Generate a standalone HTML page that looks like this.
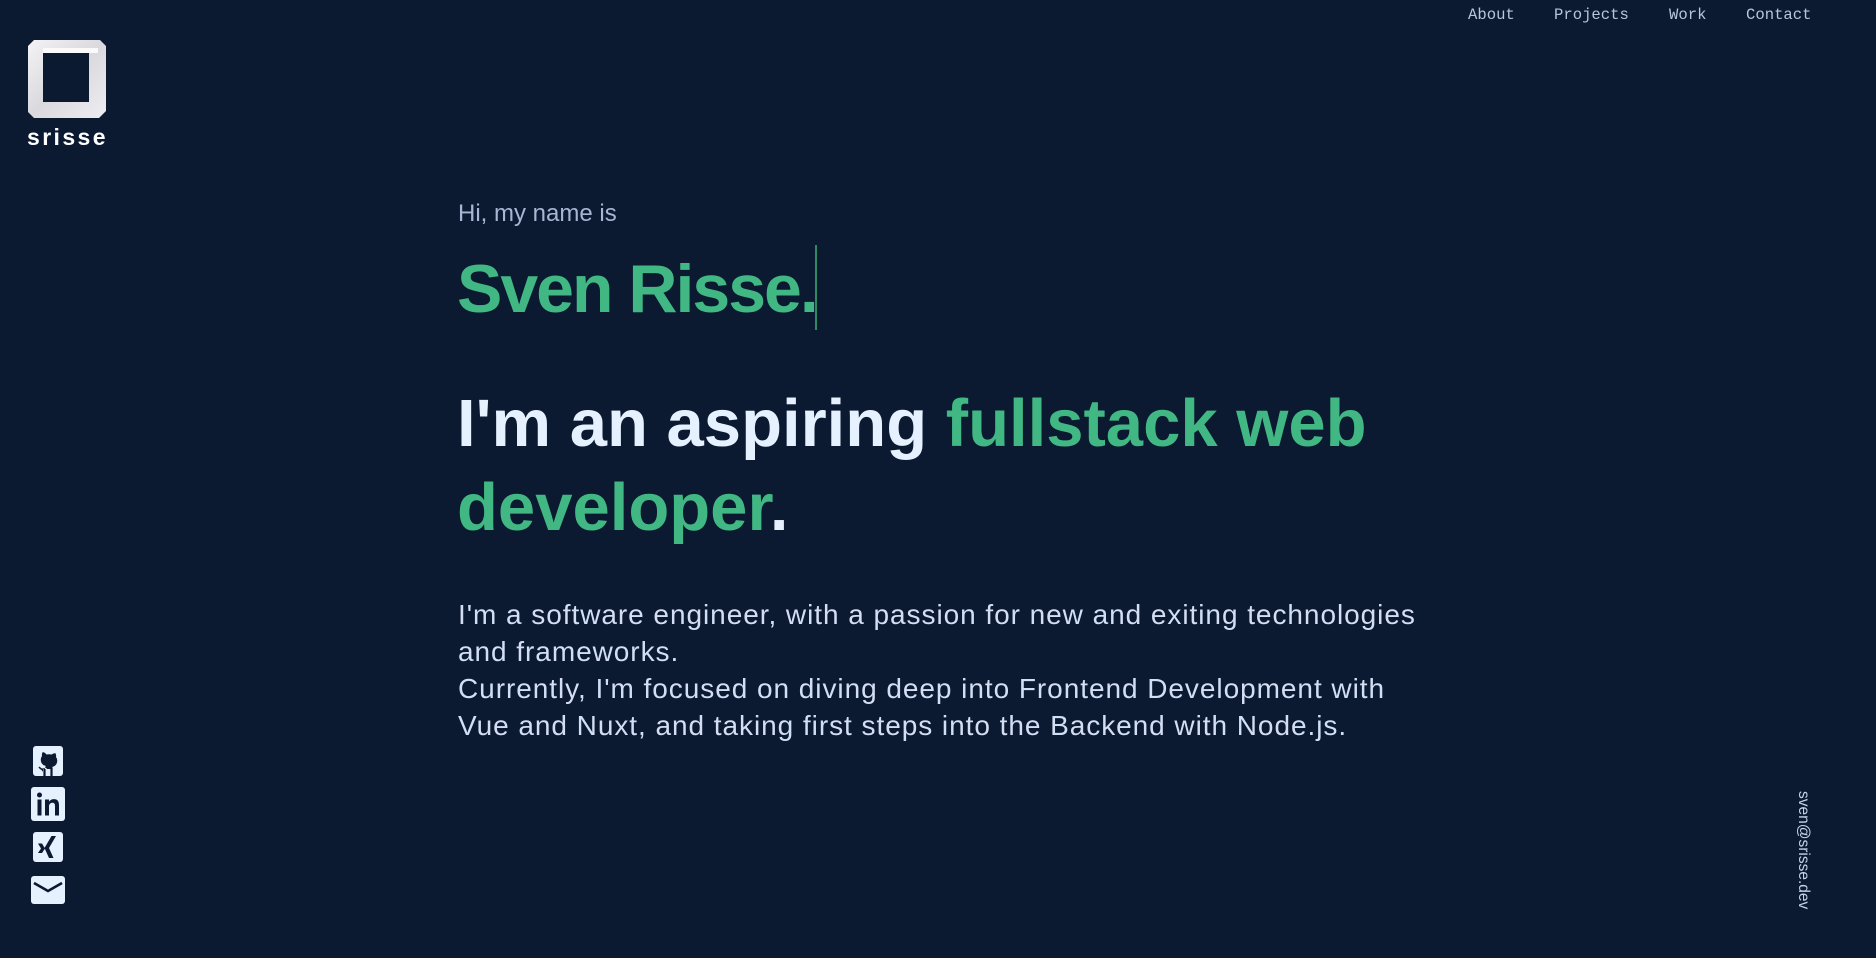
<!DOCTYPE html>
<html><head><meta charset="utf-8"><style>
html,body{margin:0;padding:0;background:#0b1931;width:1876px;height:958px;overflow:hidden;position:relative;font-family:"Liberation Sans",sans-serif}
.nav{position:absolute;top:6px;font-family:"Liberation Mono",monospace;font-size:15.6px;color:#b9c4de}
.abs{position:absolute;white-space:nowrap}
.g{color:#41b883}
</style></head><body>
<svg class="abs" style="left:26px;top:38px" width="82" height="82" viewBox="0 0 82 82">
<defs><linearGradient id="lg" x1="0" y1="0" x2="1" y2="1"><stop offset="0" stop-color="#f4f4f6"/><stop offset="0.5" stop-color="#d9d9de"/><stop offset="1" stop-color="#eeeeF2"/></linearGradient></defs>
<polygon points="8,2 74,2 80,8 80,73 73,80 8,80 2,74 2,8" fill="url(#lg)"/>
<rect x="17" y="15" width="46" height="49" fill="#0b1931"/>
<polygon points="17,10 72,10 72,15 17,15" fill="#fafafa"/>
</svg>
<div class="abs" style="left:27px;top:124px;font-size:23px;font-weight:bold;letter-spacing:2.4px;color:#fff">srisse</div>

<div class="nav" style="left:1468px">About</div>
<div class="nav" style="left:1554px">Projects</div>
<div class="nav" style="left:1669px">Work</div>
<div class="nav" style="left:1746px">Contact</div>

<div class="abs" style="left:458px;top:200px;font-size:24px;color:#a8b6d3">Hi, my name is</div>
<div class="abs g" style="left:457px;top:249px;font-size:68px;font-weight:bold;letter-spacing:-2px;line-height:80px">Sven Risse.</div>
<div class="abs" style="left:815px;top:245px;width:2px;height:85px;background:#2f8a63"></div>
<div class="abs" style="left:457px;top:382px;font-size:67px;font-weight:bold;letter-spacing:0;line-height:84px;color:#e6f1ff">I'm an aspiring <span class="g">fullstack web</span><br><span class="g">developer</span>.</div>
<div class="abs" style="left:458px;top:596px;font-size:28px;line-height:37px;color:#d3def3;letter-spacing:0.95px">I'm a software engineer, with a passion for new and exiting technologies<br>and frameworks.<br>Currently, I'm focused on diving deep into Frontend Development with<br>Vue and Nuxt, and taking first steps into the Backend with Node.js.</div>

<svg class="abs" style="left:33px;top:746px" width="30" height="30" viewBox="0 0 30 30"><rect width="30" height="30" rx="3" fill="#e6f1ff"/><path d="M11 27v-4c-3 1-4-1-5-2M19 27v-4c0-1.5-.5-2-1-2.5 3-.5 5.5-1.7 5.5-6 0-1.3-.5-2.4-1.3-3.2.2-.6.3-1.8-.2-3.3 0 0-1.2-.2-3.3 1.3a11 11 0 0 0-5.4 0C11.2 6.8 10 7 10 7c-.5 1.5-.4 2.7-.2 3.3-.8.8-1.3 1.9-1.3 3.2 0 4.3 2.5 5.5 5.5 6-.5.5-1 1.2-1 2.5" fill="#0b1931" stroke="#0b1931" stroke-width="1.5"/><rect x="10" y="23" width="10" height="7" fill="#e6f1ff"/><path d="M11.5 23v7M18.5 23v7" stroke="#0b1931" stroke-width="2.2"/></svg>
<svg class="abs" style="left:31px;top:787px" width="34" height="34" viewBox="0 0 34 34"><rect width="34" height="34" rx="3" fill="#e6f1ff"/><circle cx="8.5" cy="8" r="2.5" fill="#0b1931"/><rect x="6.5" y="12.5" width="4" height="16" fill="#0b1931"/><path d="M14 12.5h4v2.2c1-1.6 2.6-2.6 5-2.6 3.5 0 5 2.2 5 6v10.4h-4v-9.5c0-2-.8-3.2-2.5-3.2s-3.5 1.2-3.5 3.5v9.2h-4z" fill="#0b1931"/></svg>
<svg class="abs" style="left:33px;top:832px" width="30" height="30" viewBox="0 0 30 30"><rect width="30" height="30" rx="3" fill="#e6f1ff"/><path d="M5 11.5h4l3 5-3 4.5H5l3-4.5z" fill="#0b1931"/><path d="M18.5 4h4.5l-7 12 4.5 10h-4.5l-4.5-10z" fill="#0b1931"/></svg>
<svg class="abs" style="left:31px;top:876px" width="34" height="28" viewBox="0 0 34 28"><rect width="34" height="28" rx="3" fill="#e6f1ff"/><path d="M3 7l14 8 14-8" fill="none" stroke="#0b1931" stroke-width="2.6"/></svg>

<div class="abs" style="left:1794px;top:791px;writing-mode:vertical-rl;font-size:15.5px;color:#c4d1ea">sven@srisse.dev</div>
</body></html>
